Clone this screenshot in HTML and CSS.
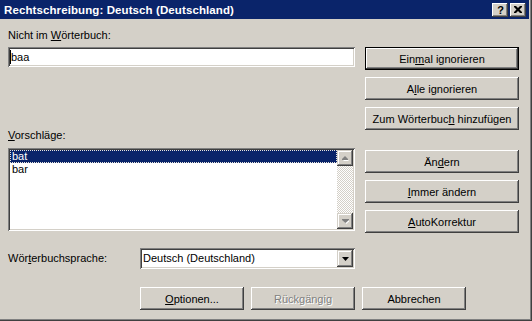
FILE: index.html
```html
<!DOCTYPE html>
<html lang="de">
<head>
<meta charset="utf-8">
<title>Rechtschreibung</title>
<link rel="stylesheet" href="styles.css">
</head>
<body>
<div class="window">
  <div class="titlebar">
    <span class="title">Rechtschreibung: Deutsch (Deutschland)</span>
    <div class="caption-btns">
      <span class="cap help">?</span>
      <span class="cap close">
        <svg width="8" height="7" viewBox="0 0 8 7"><path d="M0 0h2l2 2 2-2h2v1L5.5 3.5 8 6v1H6L4 5 2 7H0V6l2.5-2.5L0 1z" fill="#000"/></svg>
      </span>
    </div>
  </div>
  <div class="body">
    <div class="top">
      <div class="left">
        <div class="lbl lbl-first">Nicht im <u>W</u>örterbuch:</div>
        <div class="field input"><span class="caret"></span><span>baa</span></div>
        <div class="lbl lbl-sugg"><u>V</u>orschläge:</div>
        <div class="field listbox">
          <div class="items">
            <div class="item sel">bat</div>
            <div class="item">bar</div>
          </div>
          <div class="scrollbar">
            <span class="sbtn">
              <svg width="7" height="5" viewBox="0 0 7 5"><path d="M4 2l3 3H1z" fill="#fff"/><path d="M3 0l3 3v1H0V3z" fill="#808080"/></svg>
            </span>
            <span class="track"></span>
            <span class="sbtn">
              <svg width="7" height="5" viewBox="0 0 7 5"><path d="M1 1h7L4.5 5z" fill="#fff"/><path d="M0 0h7v1L3.5 4 0 1z" fill="#808080"/></svg>
            </span>
          </div>
        </div>
        <div class="langrow">
          <span class="lbl">Wör<u>t</u>erbuchsprache:</span>
          <div class="field select">
            <span class="seltext">Deutsch (Deutschland)</span>
            <span class="ddbtn">
              <svg width="7" height="4" viewBox="0 0 7 4"><path d="M0 0h7L3.5 4z" fill="#000"/></svg>
            </span>
          </div>
        </div>
      </div>
      <div class="right">
        <span class="btn default"><span>Ein<u>m</u>al ignorieren</span></span>
        <span class="btn"><span>A<u>l</u>le ignorieren</span></span>
        <span class="btn"><span>Zum Wörterbuc<u>h</u> hinzufügen</span></span>
        <span class="btn gap"><span>Än<u>d</u>ern</span></span>
        <span class="btn"><span><u>I</u>mmer ändern</span></span>
        <span class="btn"><span><u>A</u>utoKorrektur</span></span>
      </div>
    </div>
    <div class="bottom">
      <span class="btn wide"><span><u>O</u>ptionen...</span></span>
      <span class="btn wide disabled"><span>Rückgängig</span></span>
      <span class="btn wide"><span>Abbrechen</span></span>
    </div>
  </div>
</div>
</body>
</html>
```

FILE: styles.css
```css
html, body {
  margin: 0;
  padding: 0;
  background: #d4d0c8;
}

body {
  font-family: "Liberation Sans", Arial, sans-serif;
  font-size: 11px;
  color: #000;
}

.window {
  width: 532px;
  height: 321px;
  box-sizing: border-box;
  padding: 0 3px 3px 0;
  background: #d4d0c8;
  box-shadow: inset -1px -1px 0 #404040, inset -2px -2px 0 #808080;
  overflow: hidden;
}

.titlebar {
  height: 19px;
  background: #0a246a;
  display: flex;
  align-items: center;
  padding-left: 4px;
  padding-right: 3px;
}

.title {
  color: #fff;
  font-weight: bold;
  font-size: 11.5px;
  letter-spacing: 0.1px;
}

.caption-btns {
  margin-left: auto;
  display: flex;
  gap: 2px;
}

.cap {
  width: 16px;
  height: 14px;
  box-sizing: border-box;
  background: #d4d0c8;
  box-shadow: inset -1px -1px 0 #404040, inset 1px 1px 0 #fff, inset -2px -2px 0 #808080;
  display: flex;
  align-items: center;
  justify-content: center;
  font-weight: bold;
  font-size: 11px;
  line-height: 14px;
}

.cap.help {
  padding-left: 1px;
}

.body {
  padding-left: 8px;
}

.top {
  display: flex;
  gap: 10px;
}

.left {
  width: 347px;
  display: flex;
  flex-direction: column;
}

.lbl {
  line-height: 13px;
  white-space: nowrap;
}

.lbl-first {
  margin-top: 10px;
}

.field {
  background: #fff;
  box-sizing: border-box;
  box-shadow: inset 1px 1px 0 #808080, inset -1px -1px 0 #fff, inset 2px 2px 0 #404040, inset -2px -2px 0 #d4d0c8;
}

.input {
  margin-top: 5px;
  height: 20px;
  padding: 3px 3px 0 3px;
  line-height: 14px;
  display: flex;
  align-items: flex-start;
}

.caret {
  width: 1px;
  height: 14px;
  background: #000;
  margin-left: -1px;
}

.lbl-sugg {
  margin-top: 62px;
}

.listbox {
  margin-top: 6px;
  height: 83px;
  padding: 2px;
  display: flex;
}

.items {
  flex: 1;
}

.item {
  height: 13px;
  line-height: 13px;
  padding-left: 2px;
}

.item.sel {
  background: #0a246a;
  color: #fff;
  outline: 1px dotted #e8e4dc;
  outline-offset: -1px;
}

.scrollbar {
  width: 16px;
  display: flex;
  flex-direction: column;
  background-color: #fff;
  background-image:
    linear-gradient(45deg, #d4d0c8 25%, transparent 25%, transparent 75%, #d4d0c8 75%),
    linear-gradient(45deg, #d4d0c8 25%, transparent 25%, transparent 75%, #d4d0c8 75%);
  background-size: 2px 2px;
  background-position: 0 0, 1px 1px;
}

.sbtn {
  height: 16px;
  width: 16px;
  box-sizing: border-box;
  background: #d4d0c8;
  box-shadow: inset -1px -1px 0 #404040, inset 1px 1px 0 #d4d0c8, inset -2px -2px 0 #808080, inset 2px 2px 0 #fff;
  display: flex;
  align-items: center;
  justify-content: center;
}

.track {
  flex: 1;
}

.langrow {
  margin-top: 17px;
  display: flex;
  align-items: center;
}

.langrow .lbl {
  width: 132px;
}

.select {
  width: 215px;
  height: 21px;
  padding: 2px;
  display: flex;
  align-items: center;
}

.seltext {
  flex: 1;
  padding-left: 1px;
  line-height: 17px;
}

.ddbtn {
  width: 16px;
  height: 17px;
  box-sizing: border-box;
  background: #d4d0c8;
  box-shadow: inset -1px -1px 0 #404040, inset 1px 1px 0 #d4d0c8, inset -2px -2px 0 #808080, inset 2px 2px 0 #fff;
  display: flex;
  align-items: center;
  justify-content: center;
}

.right {
  width: 154px;
  margin-top: 28px;
  display: flex;
  flex-direction: column;
  gap: 7px;
}

.btn {
  height: 23px;
  box-sizing: border-box;
  background: #d4d0c8;
  box-shadow: inset -1px -1px 0 #404040, inset 1px 1px 0 #fff, inset -2px -2px 0 #808080, inset 2px 2px 0 #d4d0c8;
  display: flex;
  align-items: center;
  justify-content: center;
  white-space: nowrap;
}

.btn.default {
  box-shadow: inset 0 0 0 1px #000, inset -2px -2px 0 #404040, inset 2px 2px 0 #fff, inset -3px -3px 0 #808080;
}

.btn.gap {
  margin-top: 13px;
}

.bottom {
  margin-top: 18px;
  padding-left: 132px;
  display: flex;
  gap: 7px;
}

.btn.wide {
  width: 104px;
}

.btn.disabled {
  color: #808080;
  text-shadow: 1px 1px 0 #fff;
}

u {
  text-decoration: underline;
  text-underline-offset: 1px;
}
```
